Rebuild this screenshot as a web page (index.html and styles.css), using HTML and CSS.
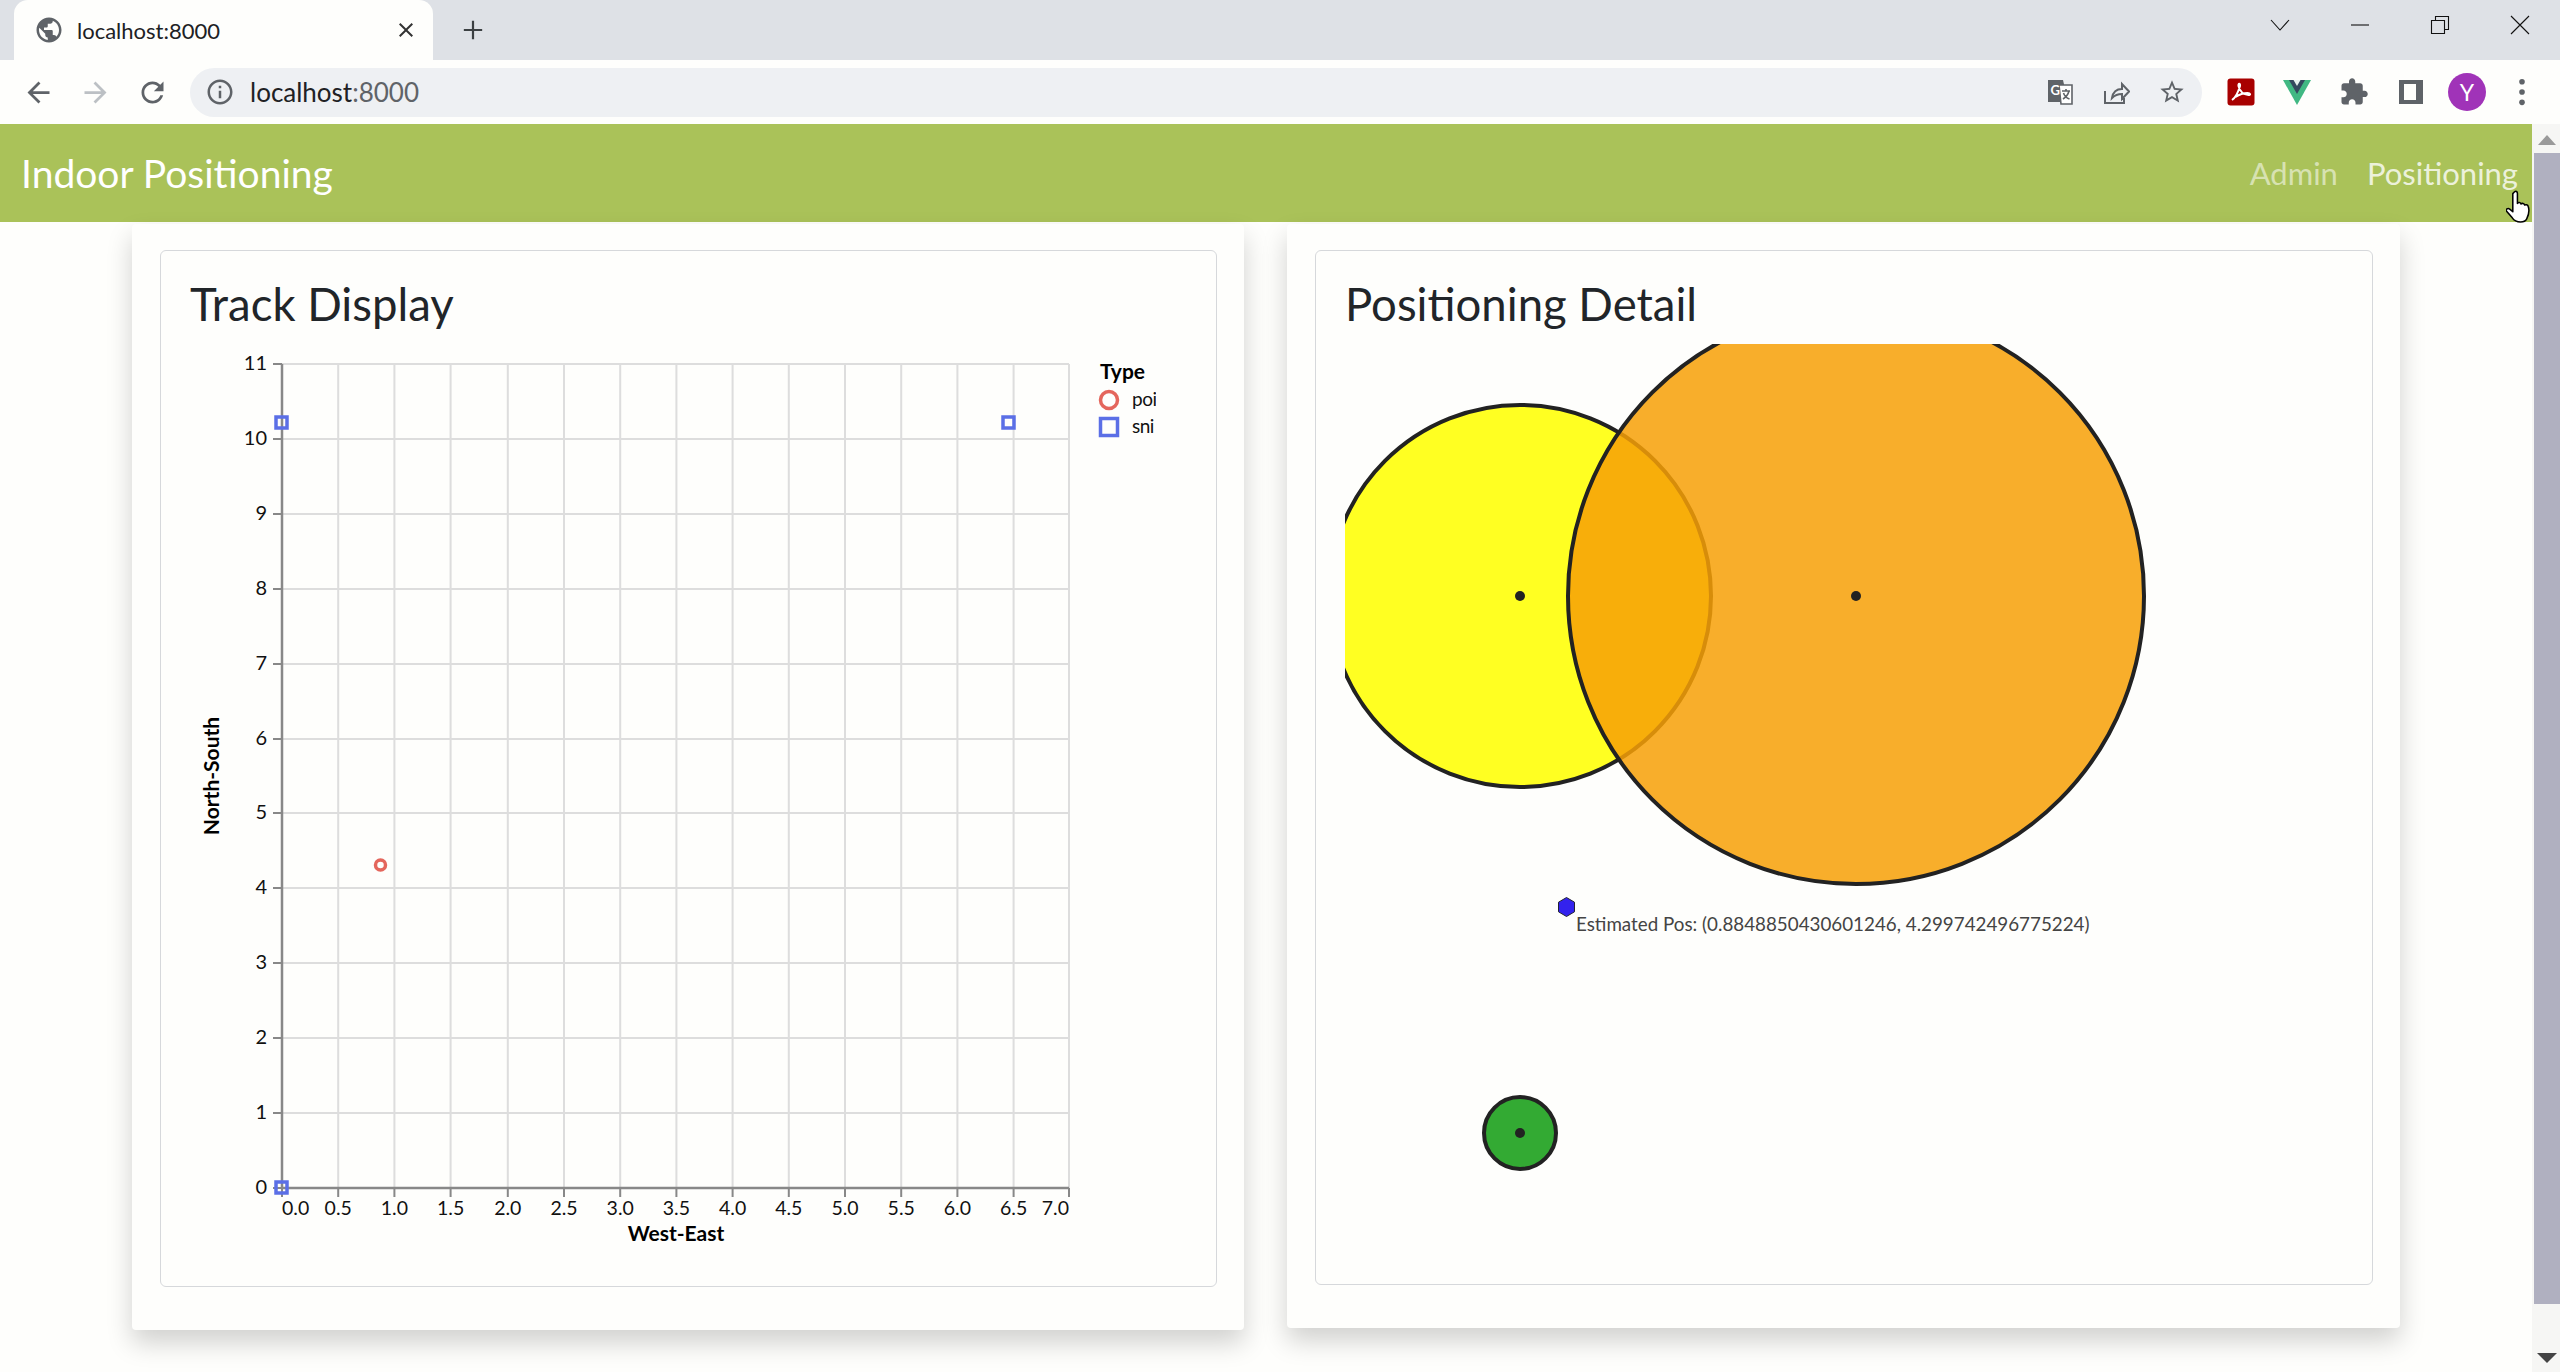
FILE: index.html
```html
<!DOCTYPE html>
<html lang="en">
<head>
  <meta charset="UTF-8">
  <title>localhost:8000</title>
  <link rel="stylesheet" href="styles.css">
</head>
<body>
  <!-- browser chrome -->
  <div class="tabstrip">
    <div class="tab">
      <svg class="tab-globe" viewBox="0 0 24 24"><path d="M12 2C6.48 2 2 6.48 2 12s4.48 10 10 10 10-4.48 10-10S17.52 2 12 2zm-1 17.93c-3.95-.49-7-3.85-7-7.93 0-.62.08-1.21.21-1.79L9 15v1c0 1.1.9 2 2 2v1.93zm6.9-2.54c-.26-.81-1-1.39-1.9-1.39h-1v-3c0-.55-.45-1-1-1H8v-2h2c.55 0 1-.45 1-1V7h2c1.1 0 2-.9 2-2v-.41c2.93 1.19 5 4.06 5 7.41 0 2.08-.8 3.97-2.1 5.39z"/></svg>
      <span class="tab-title">localhost:8000</span>
      <svg class="tab-close" viewBox="0 0 24 24"><path d="M19 6.41L17.59 5 12 10.59 6.41 5 5 6.41 10.59 12 5 17.59 6.41 19 12 13.41 17.59 19 19 17.59 13.41 12z"/></svg>
    </div>
    <svg class="new-tab" viewBox="0 0 24 24"><path d="M10.8 2h2.4v8.8H22v2.4h-8.8V22h-2.4v-8.8H2v-2.4h8.8z"/></svg>
    <div class="win-controls">
      <svg class="win-icon" viewBox="0 0 20 20"><path d="M1 5l9 10 9-10"/></svg>
      <svg class="win-icon" viewBox="0 0 20 20"><path d="M1 10h18"/></svg>
      <svg class="win-icon" viewBox="0 0 20 20"><path d="M1.5 5.5h13v13h-13zM5.5 5V1.5h13v13H15"/></svg>
      <svg class="win-icon" viewBox="0 0 20 20"><path d="M1 1l18 18M19 1L1 19"/></svg>
    </div>
  </div>

  <div class="toolbar">
    <svg class="tool-icon" viewBox="0 0 24 24"><path d="M20 11H7.83l5.59-5.59L12 4l-8 8 8 8 1.41-1.41L7.83 13H20v-2z"/></svg>
    <svg class="tool-icon tool-off" viewBox="0 0 24 24"><path d="M12 4l-1.41 1.41L16.17 11H4v2h12.17l-5.58 5.59L12 20l8-8z"/></svg>
    <svg class="tool-icon" viewBox="0 0 24 24"><path d="M17.65 6.35C16.2 4.9 14.21 4 12 4c-4.42 0-7.99 3.58-7.99 8s3.57 8 7.99 8c3.73 0 6.84-2.55 7.73-6h-2.08c-.82 2.33-3.04 4-5.65 4-3.31 0-6-2.69-6-6s2.69-6 6-6c1.66 0 3.14.69 4.22 1.78L13 11h7V4l-2.35 2.35z"/></svg>
    <div class="omnibox">
      <svg class="omni-info" viewBox="0 0 24 24"><path d="M11 7h2v2h-2zm0 4h2v6h-2zm1-9C6.48 2 2 6.48 2 12s4.48 10 10 10 10-4.48 10-10S17.52 2 12 2zm0 18c-4.41 0-8-3.59-8-8s3.59-8 8-8 8 3.59 8 8-3.59 8-8 8z"/></svg>
      <span class="omni-url">localhost<span class="omni-port">:8000</span></span>
      <div class="omni-actions">
        <svg class="omni-icon" viewBox="0 0 28 28">
          <path d="M2 2h15l5 22H2z" fill="#5f6368"/>
          <path d="M13 7h13v19H15z" fill="#fff" stroke="#5f6368" stroke-width="1.6"/>
          <text x="4.5" y="17" class="translate-g">G</text>
          <path d="M16 13h8M20 11v2M23 13c-1 4-3 6-6 8M17.5 15c1 3 3 5 6 6" fill="none" stroke="#5f6368" stroke-width="1.6"/>
        </svg>
        <svg class="omni-icon" viewBox="0 0 28 28"><path d="M3 13v12h19v-5M10 20c1-6 5-9 10-9V6l7 7.5-7 7.5v-5c-4 0-7 1-10 4z" fill="none" stroke="#5f6368" stroke-width="2"/></svg>
        <svg class="omni-icon" viewBox="0 0 24 24"><path d="M22 9.24l-7.19-.62L12 2 9.19 8.63 2 9.24l5.46 4.73L5.82 21 12 17.27 18.18 21l-1.63-7.03L22 9.24zM12 15.4l-3.76 2.27 1-4.28-3.32-2.88 4.38-.38L12 6.1l1.71 4.04 4.38.38-3.32 2.88 1 4.28L12 15.4z"/></svg>
      </div>
    </div>
    <div class="extensions">
      <svg class="ext-icon" viewBox="0 0 28 28">
        <rect x="0.5" y="0.5" width="27" height="27" rx="3" fill="#a80000"/>
        <path d="M5 22c3-2 6-7 8-14 .5-3-2-3-1.500 0 1 5 5 9 10 9 2.500 0 2-2-1-2-4 0-9 2-12 4" fill="none" stroke="#fff" stroke-width="2"/>
      </svg>
      <svg class="ext-icon" viewBox="0 0 28 28">
        <path d="M0 2h28L14 27z" fill="#41b883"/>
        <path d="M6 2h16L14 16z" fill="#34495e"/>
        <path d="M10.500 2h7L14 8z" fill="#e8f2ee"/>
      </svg>
      <svg class="ext-icon ext-puzzle" viewBox="0 0 24 24"><path d="M20.5 11H19V7c0-1.100-.9-2-2-2h-4V3.500C13 2.120 11.880 1 10.500 1S8 2.120 8 3.500V5H4c-1.100 0-1.990.9-1.990 2v3.800H3.500c1.490 0 2.700 1.210 2.700 2.700s-1.210 2.700-2.700 2.700H2V20c0 1.100.9 2 2 2h3.800v-1.500c0-1.490 1.210-2.700 2.700-2.700 1.490 0 2.700 1.210 2.700 2.700V22H17c1.100 0 2-.9 2-2v-4h1.500c1.380 0 2.500-1.120 2.500-2.500S21.880 11 20.500 11z"/></svg>
      <svg class="ext-icon" viewBox="0 0 28 28"><path d="M2 2h24v24H2zM7 6v16h12V6z" fill="#5f6368" fill-rule="evenodd"/></svg>
      <div class="avatar">Y</div>
      <svg class="ext-menu" viewBox="0 0 8 32"><circle cx="4" cy="5" r="3"/><circle cx="4" cy="16" r="3"/><circle cx="4" cy="27" r="3"/></svg>
    </div>
  </div>

  <!-- page + scrollbar -->
  <div class="viewport">
    <div class="page">
      <nav class="navbar">
        <span class="brand">Indoor Positioning</span>
        <div class="nav-links">
          <span class="nav-link">Admin</span>
          <span class="nav-link nav-link-hover">Positioning</span>
        </div>
      </nav>

      <main class="columns">
        <section class="card">
          <div class="card-inner">
            <h3>Track Display</h3>
            <svg class="track-chart" viewBox="0 0 966 917">
              <g class="grid">
                <path d="M148.200 20v824M204.400 20v824M260.600 20v824M317.800 20v824M374 20v824M430.200 20v824M486.400 20v824M542.600 20v824M598.800 20v824M655 20v824M711.200 20v824M767.400 20v824M823.600 20v824M879 20v824"/>
                <path d="M92 20h787M92 95h787M92 170h787M92 245h787M92 320h787M92 395h787M92 469h787M92 544h787M92 619h787M92 694h787M92 769h787"/>
              </g>
              <g class="ticks">
                <path d="M92 844v9M148.200 844v9M204.400 844v9M260.600 844v9M317.800 844v9M374 844v9M430.200 844v9M486.400 844v9M542.600 844v9M598.800 844v9M655 844v9M711.200 844v9M767.400 844v9M823.600 844v9M879 844v9"/>
                <path d="M83 20h9M83 95h9M83 170h9M83 245h9M83 320h9M83 395h9M83 469h9M83 544h9M83 619h9M83 694h9M83 769h9M83 844h9"/>
              </g>
              <path class="axis" d="M92 20v824h787"/>

              <g class="tick-y">
                <text x="77" y="26">11</text>
                <text x="77" y="101">10</text>
                <text x="77" y="176">9</text>
                <text x="77" y="251">8</text>
                <text x="77" y="326">7</text>
                <text x="77" y="401">6</text>
                <text x="77" y="475">5</text>
                <text x="77" y="550">4</text>
                <text x="77" y="625">3</text>
                <text x="77" y="700">2</text>
                <text x="77" y="775">1</text>
                <text x="77" y="850">0</text>
              </g>
              <g class="tick-x">
                <text x="92" y="871" class="tick-first">0.0</text>
                <text x="148.200" y="871">0.5</text>
                <text x="204.400" y="871">1.0</text>
                <text x="260.600" y="871">1.5</text>
                <text x="317.800" y="871">2.0</text>
                <text x="374" y="871">2.5</text>
                <text x="430.200" y="871">3.0</text>
                <text x="486.400" y="871">3.5</text>
                <text x="542.600" y="871">4.0</text>
                <text x="598.800" y="871">4.5</text>
                <text x="655" y="871">5.0</text>
                <text x="711.200" y="871">5.5</text>
                <text x="767.400" y="871">6.0</text>
                <text x="823.600" y="871">6.5</text>
                <text x="879" y="871" class="tick-last">7.0</text>
              </g>
              <text class="axis-title" x="486" y="897">West-East</text>
              <text class="axis-title" transform="translate(29 432) rotate(-90)">North-South</text>

              <rect class="mark-sniffer" x="86" y="73" width="11" height="11"/>
              <rect class="mark-sniffer" x="813" y="73" width="11" height="11"/>
              <rect class="mark-sniffer" x="86" y="838" width="11" height="11"/>
              <circle class="mark-point" cx="190.500" cy="521" r="5"/>

              <text class="legend-title" x="910" y="35">Type</text>
              <circle class="mark-point" cx="919" cy="56" r="8.500"/>
              <rect class="mark-sniffer" x="910.500" y="74.500" width="17" height="17"/>
              <text class="legend-label" x="942" y="62">poi</text>
              <text class="legend-label" x="942" y="89">sni</text>
            </svg>
          </div>
        </section>

        <section class="card card-short">
          <div class="card-inner">
            <h3>Positioning Detail</h3>
            <svg class="detail-chart" viewBox="0 0 996 917">
              <circle class="ring" cx="175" cy="252" r="191" fill="#ffff22"/>
              <circle class="ring ring-sniffer" cx="511" cy="252" r="288" fill="#f7a006"/>
              <circle class="ring" cx="175" cy="789" r="36" fill="#33aa33"/>
              <circle class="pin" cx="175" cy="252" r="5"/>
              <circle class="pin" cx="511" cy="252" r="5"/>
              <circle class="pin" cx="175" cy="789" r="5"/>
              <path class="estimate" d="M221.500 553.500l8 4.700v9.600l-8 4.700-8-4.700v-9.600z"/>
              <text class="estimate-label" x="231" y="587">Estimated Pos: (0.8848850430601246, 4.299742496775224)</text>
            </svg>
          </div>
        </section>
      </main>
    </div>

    <div class="scrollbar">
      <div class="scroll-arrow"></div>
      <div class="scroll-thumb"></div>
      <div class="scroll-arrow-down"></div>
    </div>

    <svg class="hand-cursor" viewBox="0 0 26 32">
      <path d="M8 2c1.500-1.500 3-.5 3 1.500V13c1-1.500 3-1 3.500.5 1-1 3-.5 3.500 1 1-.5 3-.5 3.500 1.500 1 3 .5 8-1.500 12-1 2-2 3-6 3s-6-1-8-4l-5.500-6.500c-1-1.500 1-3.500 3-2l3 2.500V3.500z" fill="#fff" stroke="#000" stroke-width="1.500" stroke-linejoin="round"/>
    </svg>
  </div>
</body>
</html>
```

FILE: styles.css
```css
* { box-sizing: border-box; }
html, body { margin: 0; height: 100%; overflow: hidden; }
body { font-family: Lato, "Open Sans", sans-serif; background: #fefefc; color: #212529; display: flex; flex-direction: column; }

/* browser chrome */
.tabstrip { height: 60px; background: #dee1e6; display: flex; align-items: flex-end; padding-left: 14px; flex: none; }
.tab { width: 419px; height: 60px; background: #fefefc; border-radius: 14px 14px 0 0; display: flex; align-items: center; padding: 0 15px 0 20px; }
.tab-globe { width: 30px; height: 30px; fill: #5f6368; flex: none; }
.tab-title { margin-left: 13px; font-size: 22px; color: #202124; flex: 1; }
.tab-close { width: 24px; height: 24px; fill: #333; flex: none; }
.new-tab { width: 22px; height: 22px; fill: #3c4043; margin: 0 0 19px 29px; align-self: flex-end; }
.win-controls { margin-left: auto; align-self: flex-start; display: flex; gap: 60px; padding: 15px 30px 0 0; }
.win-icon { width: 20px; height: 20px; fill: none; stroke: #111; stroke-width: 1.1; }

.toolbar { height: 64px; background: #fefefc; display: flex; align-items: center; padding-left: 22px; gap: 24px; flex: none; }
.tool-icon { width: 33px; height: 33px; fill: #5f6368; flex: none; }
.tool-off { fill: #bcc0c4; }
.omnibox { margin-left: -3px; width: 2012px; height: 49px; background: #eef0f3; border-radius: 25px; display: flex; align-items: center; padding: 0 16px 0 15px; flex: none; }
.omni-info { width: 30px; height: 30px; fill: #5f6368; flex: none; }
.omni-url { margin-left: 15px; font-size: 26px; color: #202124; }
.omni-port { color: #5f6368; }
.omni-actions { margin-left: auto; display: flex; gap: 28px; align-items: center; }
.omni-icon { width: 28px; height: 28px; fill: #5f6368; }
.translate-g { font-size: 13px; font-weight: 700; fill: #fff; }
.extensions { display: flex; align-items: center; margin-left: 1px; gap: 28px; flex: none; }
.ext-icon { width: 28px; height: 28px; flex: none; }
.ext-puzzle { fill: #5f6368; width: 30px; height: 30px; }
.avatar { margin-left: -5px; width: 38px; height: 38px; border-radius: 50%; background: #a033b8; color: #fff; font-size: 23px; display: flex; align-items: center; justify-content: center; flex: none; }
.ext-menu { width: 8px; height: 30px; fill: #5f6368; margin-left: 4px; flex: none; }

/* page */
.viewport { flex: 1; display: flex; position: relative; min-height: 0; overflow: hidden; }
.page { flex: 1; min-width: 0; }
.navbar { height: 98px; background: #aac259; display: flex; align-items: center; justify-content: space-between; padding: 0 14px 0 21px; }
.brand { font-size: 39px; color: #fff; }
.nav-links { display: flex; gap: 29px; }
.nav-link { font-size: 31px; color: rgba(255,255,255,.55); }
.nav-link-hover { color: rgba(255,255,255,.8); }

.columns { display: grid; grid-template-columns: 1112px 1113px; gap: 43px; align-items: start; padding: 2px 0 0 132px; }
.card { height: 1106px; background: #fefefc; padding: 26px 27px 43px 28px; box-shadow: 0 13px 26px rgba(0,0,0,.18); border-radius: 4px; }
.card-short { height: 1104px; }
.card-inner { height: 100%; border: 1px solid #d6d8db; border-radius: 6px; padding: 25px 29px; display: flex; flex-direction: column; }
h3 { margin: 0 0 13px; font-size: 45.5px; line-height: 55px; font-weight: 400; color: #212529; }
.track-chart { width: 966px; height: 917px; flex: none; }
.detail-chart { width: 996px; height: 917px; flex: none; }

/* vega-ish chart */
.grid { fill: none; stroke: #ddd; stroke-width: 2; }
.ticks { fill: none; stroke: #888; stroke-width: 2; }
.axis { fill: none; stroke: #888; stroke-width: 2.5; }
.track-chart text { fill: #111; }
.tick-y text { font-size: 20px; text-anchor: end; }
.tick-x text { font-size: 19.5px; text-anchor: middle; }
.tick-x .tick-first { text-anchor: start; }
.tick-x .tick-last { text-anchor: end; }
.track-chart .axis-title { font-size: 21px; font-weight: 700; text-anchor: middle; fill: #000; }
.track-chart .legend-title { font-size: 21px; font-weight: 700; fill: #000; }
.track-chart .legend-label { font-size: 19px; letter-spacing: -.5px; }
.mark-sniffer { fill: none; stroke: #5b6fe6; stroke-width: 3.5; }
.mark-point { fill: none; stroke: #e4665c; stroke-width: 3.5; }

/* detail chart */
.ring { stroke: #222; stroke-width: 4; }
.ring-sniffer { fill-opacity: .85; }
.pin { fill: #222; }
.estimate { fill: #3322ee; stroke: #223; stroke-width: 1; }
.estimate-label { font-size: 18.8px; fill: #444; }

/* scrollbar */
.scrollbar { width: 28px; flex: none; background: #f6f6f4; display: flex; flex-direction: column; align-items: center; padding-left: 2px; }
.scroll-arrow { width: 0; height: 0; margin: 11px 0 8px; border-left: 9px solid transparent; border-right: 9px solid transparent; border-bottom: 10px solid #9a9a9a; }
.scroll-thumb { width: 100%; height: 1151px; background: #b0b0c0; }
.scroll-arrow-down { width: 0; height: 0; margin-top: auto; margin-bottom: 9px; border-left: 10px solid transparent; border-right: 10px solid transparent; border-top: 10px solid #444; }

.hand-cursor { position: absolute; left: 2506px; top: 66px; width: 27px; height: 33px; }
```
